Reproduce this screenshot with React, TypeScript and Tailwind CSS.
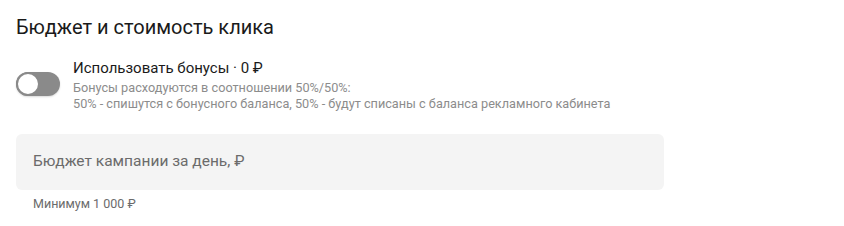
export default function App() {
  return (
    <div className="w-[844px] h-[226px] bg-white px-4 pt-[14px]" style={{ fontFamily: "Roboto, 'Liberation Sans', sans-serif" }}>
      <h2 className="text-[20px] leading-[26px] text-[#1a1a1a]">Бюджет и стоимость клика</h2>
      <div className="mt-[18px] flex items-center gap-3">
        <button className="relative w-[44px] h-[24px] rounded-full bg-[#8a8a8a] shrink-0 shadow-[0_1px_2px_rgba(0,0,0,0.15)] -mt-[3px]">
          <span className="absolute left-0 top-0 w-[24px] h-[24px] rounded-full bg-white border-[2px] border-[#8a8a8a]" />
        </button>
        <div className="ml-[1px]">
          <div className="text-[15px] leading-[20px] text-[#1a1a1a]">Использовать бонусы · 0 ₽</div>
          <div className="text-[12.7px] leading-[16px] text-[#8c8c8c] mt-[2px]">
            Бонусы расходуются в соотношении 50%/50%:
            <br />
            50% - спишутся с бонусного баланса, 50% - будут списаны с баланса рекламного кабинета
          </div>
        </div>
      </div>
      <div className="mt-[22px] w-[648px] h-[56px] rounded-[6px] bg-[#f4f4f4] flex items-center px-[17px]">
        <span className="text-[15.5px] text-[#6b6b6b]">Бюджет кампании за день, ₽</span>
      </div>
      <div className="mt-[6px] pl-[17px] text-[12.5px] leading-[16px] text-[#6b6b6b]">Минимум 1 000 ₽</div>
    </div>
  );
}
